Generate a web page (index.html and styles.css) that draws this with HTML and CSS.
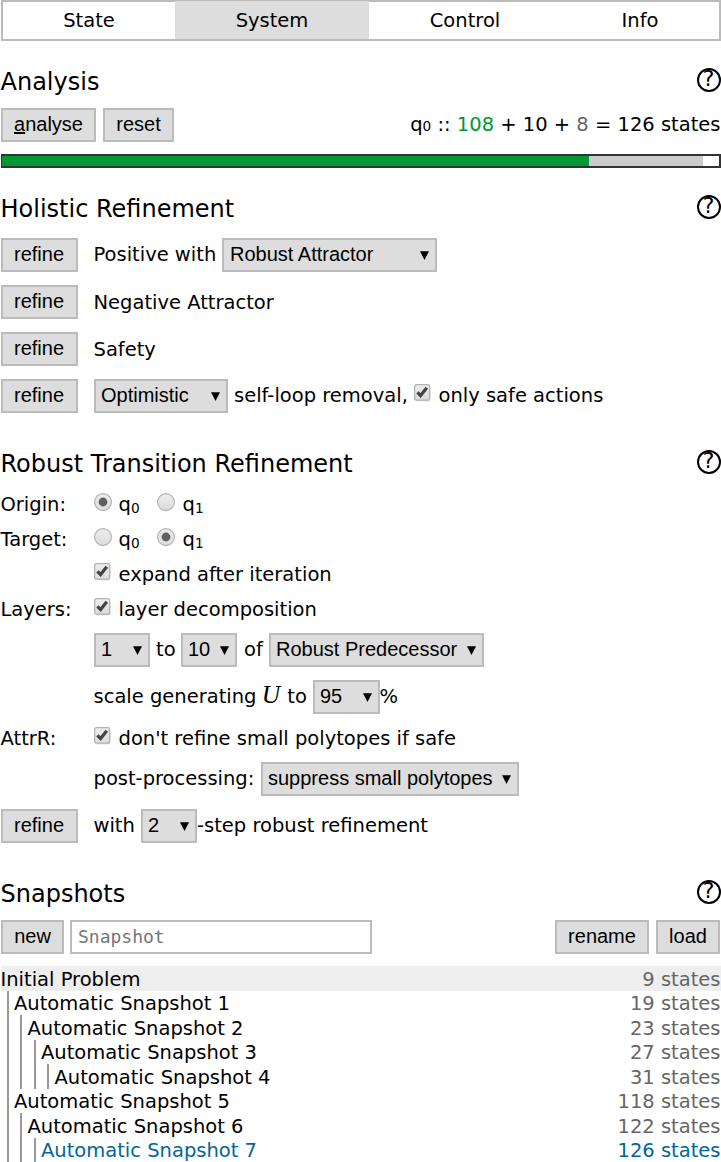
FILE: index.html
```
<!DOCTYPE html>
<html lang="en">
<head>
<meta charset="utf-8">
<title>System</title>
<link rel="stylesheet" href="styles.css">
</head>
<body>
<svg class="defs" width="0" height="0" aria-hidden="true">
  <defs>
    <linearGradient id="face" x1="0" y1="0" x2="0" y2="1"><stop offset="0" stop-color="#ededed"/><stop offset="1" stop-color="#dcdcdc"/></linearGradient>
    <symbol id="arrow" viewBox="0 0 9 9"><path d="M0 0.2H9L4.5 9Z"/></symbol>
    <symbol id="check" viewBox="0 0 18 19">
      <rect x="0.5" y="1.5" width="16" height="16" rx="2.5" fill="#000" opacity=".1"/>
      <rect x="0.6" y="0.6" width="15" height="15.6" rx="2" fill="url(#face)" stroke="#b3b3b3" stroke-width="1.3"/>
      <path d="M3.4 8.4L6.6 11.6L12.8 3.8" fill="none" stroke="#444" stroke-width="3.2"/>
    </symbol>
    <symbol id="radio" viewBox="0 0 18 19">
      <circle cx="9" cy="9.6" r="8.8" fill="#000" opacity=".1"/>
      <circle cx="9" cy="9" r="8.4" fill="url(#face)" stroke="#b3b3b3" stroke-width="1.1"/>
    </symbol>
    <symbol id="radio-on" viewBox="0 0 18 19">
      <use href="#radio" width="18" height="19"/>
      <circle cx="9" cy="9" r="4.4" fill="#606060"/>
    </symbol>
  </defs>
</svg>
<main class="panel">
  <nav class="tabs">
    <a class="tab">State</a><a class="tab tab-active">System</a><a class="tab">Control</a><a class="tab">Info</a>
  </nav>

  <section class="analysis">
    <header class="head"><h2>Analysis</h2><span class="help">?</span></header>
    <div class="bar">
      <button class="btn w-analyse"><u>a</u>nalyse</button><button class="btn w-reset">reset</button>
      <span class="summary">q<span class="index">0</span> :: <span class="yes">108</span> + 10 + <span class="dim">8</span> = 126 states</span>
    </div>
    <div class="progress"><span class="done"></span><span class="rest"></span></div>
  </section>

  <section class="holistic">
    <header class="head"><h2>Holistic Refinement</h2><span class="help">?</span></header>
    <div class="row"><button class="btn key">refine</button><span class="pre">Positive with</span><span class="select w-attr">Robust Attractor<svg class="arrow"><use href="#arrow"/></svg></span></div>
    <div class="row"><button class="btn key">refine</button><span class="low">Negative Attractor</span></div>
    <div class="row"><button class="btn key">refine</button><span class="low">Safety</span></div>
    <div class="row"><button class="btn key">refine</button><span class="select w-opt">Optimistic<svg class="arrow"><use href="#arrow"/></svg></span><span class="loop">self-loop removal,</span><svg class="tick"><use href="#check"/></svg><span>only safe actions</span></div>
  </section>

  <section class="robust">
    <header class="head"><h2>Robust Transition Refinement</h2><span class="help">?</span></header>
    <div class="line"><span class="key">Origin:</span><svg class="tick"><use href="#radio-on"/></svg><span class="q">q<sub>0</sub></span><svg class="tick"><use href="#radio"/></svg><span class="q">q<sub>1</sub></span></div>
    <div class="line"><span class="key">Target:</span><svg class="tick"><use href="#radio"/></svg><span class="q">q<sub>0</sub></span><svg class="tick"><use href="#radio-on"/></svg><span class="q">q<sub>1</sub></span></div>
    <div class="line"><span class="key"></span><svg class="tick"><use href="#check"/></svg><span>expand after iteration</span></div>
    <div class="line"><span class="key">Layers:</span><svg class="tick"><use href="#check"/></svg><span>layer decomposition</span></div>
    <div class="row first"><span class="key"></span><span class="select w-num">1<svg class="arrow"><use href="#arrow"/></svg></span><span class="to">to</span><span class="select w-num">10<svg class="arrow"><use href="#arrow"/></svg></span><span class="of">of</span><span class="select w-attr">Robust Predecessor<svg class="arrow"><use href="#arrow"/></svg></span></div>
    <div class="row"><span class="key"></span><span class="scale">scale generating <i class="math">U</i> to</span><span class="select w-pct">95<svg class="arrow"><use href="#arrow"/></svg></span><span>%</span></div>
    <div class="line attr"><span class="key">AttrR:</span><svg class="tick"><use href="#check"/></svg><span>don't refine small polytopes if safe</span></div>
    <div class="row post"><span class="key"></span><span class="post-label">post-processing:</span><span class="select w-post">suppress small polytopes<svg class="arrow"><use href="#arrow"/></svg></span></div>
    <div class="row"><button class="btn key">refine</button><span class="with">with</span><span class="select w-num">2<svg class="arrow"><use href="#arrow"/></svg></span><span class="step">-step robust refinement</span></div>
  </section>

  <section class="snapshots">
    <header class="head"><h2>Snapshots</h2><span class="help">?</span></header>
    <div class="bar">
      <button class="btn w-new">new</button><input class="name" placeholder="Snapshot"><button class="btn w-rename">rename</button><button class="btn w-load">load</button>
    </div>
    <div class="tree">
      <div class="node selected"><span>Initial Problem</span><span class="count">9 states</span></div>
      <div class="kids">
        <div class="node"><span>Automatic Snapshot 1</span><span class="count">19 states</span></div>
        <div class="kids">
          <div class="node"><span>Automatic Snapshot 2</span><span class="count">23 states</span></div>
          <div class="kids">
            <div class="node"><span>Automatic Snapshot 3</span><span class="count">27 states</span></div>
            <div class="kids">
              <div class="node"><span>Automatic Snapshot 4</span><span class="count">31 states</span></div>
            </div>
          </div>
        </div>
        <div class="node"><span>Automatic Snapshot 5</span><span class="count">118 states</span></div>
        <div class="kids">
          <div class="node"><span>Automatic Snapshot 6</span><span class="count">122 states</span></div>
          <div class="kids">
            <div class="node current"><span>Automatic Snapshot 7</span><span class="count">126 states</span></div>
          </div>
        </div>
      </div>
    </div>
  </section>
</main>
</body>
</html>
```
FILE: styles.css
```
* { box-sizing: border-box; }
body { margin: 0; background: #fff; color: #000; font: 19.5px/24px "DejaVu Sans", sans-serif; overflow: hidden; }
.defs { display: block; height: 0; }
.panel { margin-left: 0.5px; width: 720px; height: 1162px; white-space: nowrap; }

.tabs { display: grid; grid-template-columns: 172px 194px 192px 158px; height: 41px; border: 2px solid #bbb; }
.tab { text-align: center; line-height: 38px; height: 37px; padding-left: 1px; }
.tab-active { background: #ddd; margin-top: -1px; padding-top: 1px; height: 38px; }

.head { display: flex; justify-content: space-between; height: 24px; }
h2 { margin: 0; font-size: 24px; font-weight: normal; line-height: 29px; }
.help { width: 24px; height: 24px; border: 2px solid #000; border-radius: 50%; text-align: center; font-size: 22px; line-height: 17px; }
.analysis { padding-top: 27px; }
.holistic { padding-top: 27px; }
.robust { padding-top: 37px; }
.snapshots { padding-top: 37px; }

.btn { flex: none; height: 34px; padding: 0 0 2px 1px; border: 2px solid #bbb; background: #ddd; color: #000; font: 20px/28px "Liberation Sans", sans-serif; }
.bar { display: flex; height: 34px; margin-top: 16px; line-height: 33px; }
.w-analyse { width: 95px; }
.w-reset { width: 71px; margin-left: 7px; }
.w-new { width: 63px; }
.w-rename { width: 94px; margin-left: auto; }
.w-load { width: 64px; margin: 0 1px 0 7px; }
.btn.key { padding-left: 0; }
.summary { margin-left: auto; }
.index { font-size: 13.7px; }
.yes { color: #093; }
.dim, .count { color: #666; }
.progress { display: flex; height: 14px; margin-top: 12px; border: 2px solid #333; border-left-width: 1px; }
.done { width: 587px; background: #093; }
.rest { width: 114px; background: #ccc; }

.row { display: flex; height: 34px; margin-top: 13px; line-height: 33px; }
.holistic .head + .row { margin-top: 19px; }
.key { flex: none; width: 77px; margin-right: 16px; }
.select { display: flex; flex: none; justify-content: space-between; align-items: center; height: 34px; padding: 0 6px 2px 5.5px; border: 2px solid #bbb; background: #ddd; font: 20px/28px "Liberation Sans", sans-serif; }
.arrow { width: 9px; height: 9px; margin-top: 3px; }
.w-attr { width: 215px; }
.w-opt { width: 134px; }
.w-num { width: 56px; }
.w-pct { width: 67px; }
.w-post { width: 258px; }
.pre { width: 128px; }
.pre + .select { padding-left: 6.5px; }
.low { padding-top: 1px; }
.loop { width: 186px; padding-left: 6.5px; }
.tick { flex: none; width: 18px; height: 19px; margin: 5px 7px 0 0; }

.line { display: flex; height: 35px; line-height: 26px; }
.robust .head + .line { margin-top: 18px; }
.line .tick { margin-top: 1px; }
.q { width: 38px; }
.q + .tick { margin-right: 8px; }
sub { font-size: 13.7px; line-height: 0; vertical-align: -2px; }
.row.first { margin-top: 1px; }
.to { width: 31px; padding-left: 6.5px; }
.of { width: 32px; padding-left: 7.5px; }
.scale { width: 219px; }
.math { font: italic 25.5px/24px "Liberation Serif", serif; margin-left: -1px; padding-right: 1px; }
.attr { margin-top: 12px; }
.row.post { margin-top: 1px; }
.post-label { width: 167px; }
.with { width: 47px; }
.step { padding-left: 0.5px; }

.name { width: 302px; height: 34px; margin-left: 6px; padding: 0 6px 2px 6.5px; border: 2px solid #bbb; font: 18px/28px "DejaVu Sans Mono", monospace; }
.name::placeholder { color: #757575; }
.tree { margin-top: 12px; }
.node { display: flex; justify-content: space-between; height: 24.5px; padding-top: 0.5px; line-height: 26px; }
.kids { margin-left: 6px; border-left: 2px solid #999; padding-left: 5.5px; }
.selected { background: #eee; }
.current, .current .count { color: #069; }
```
